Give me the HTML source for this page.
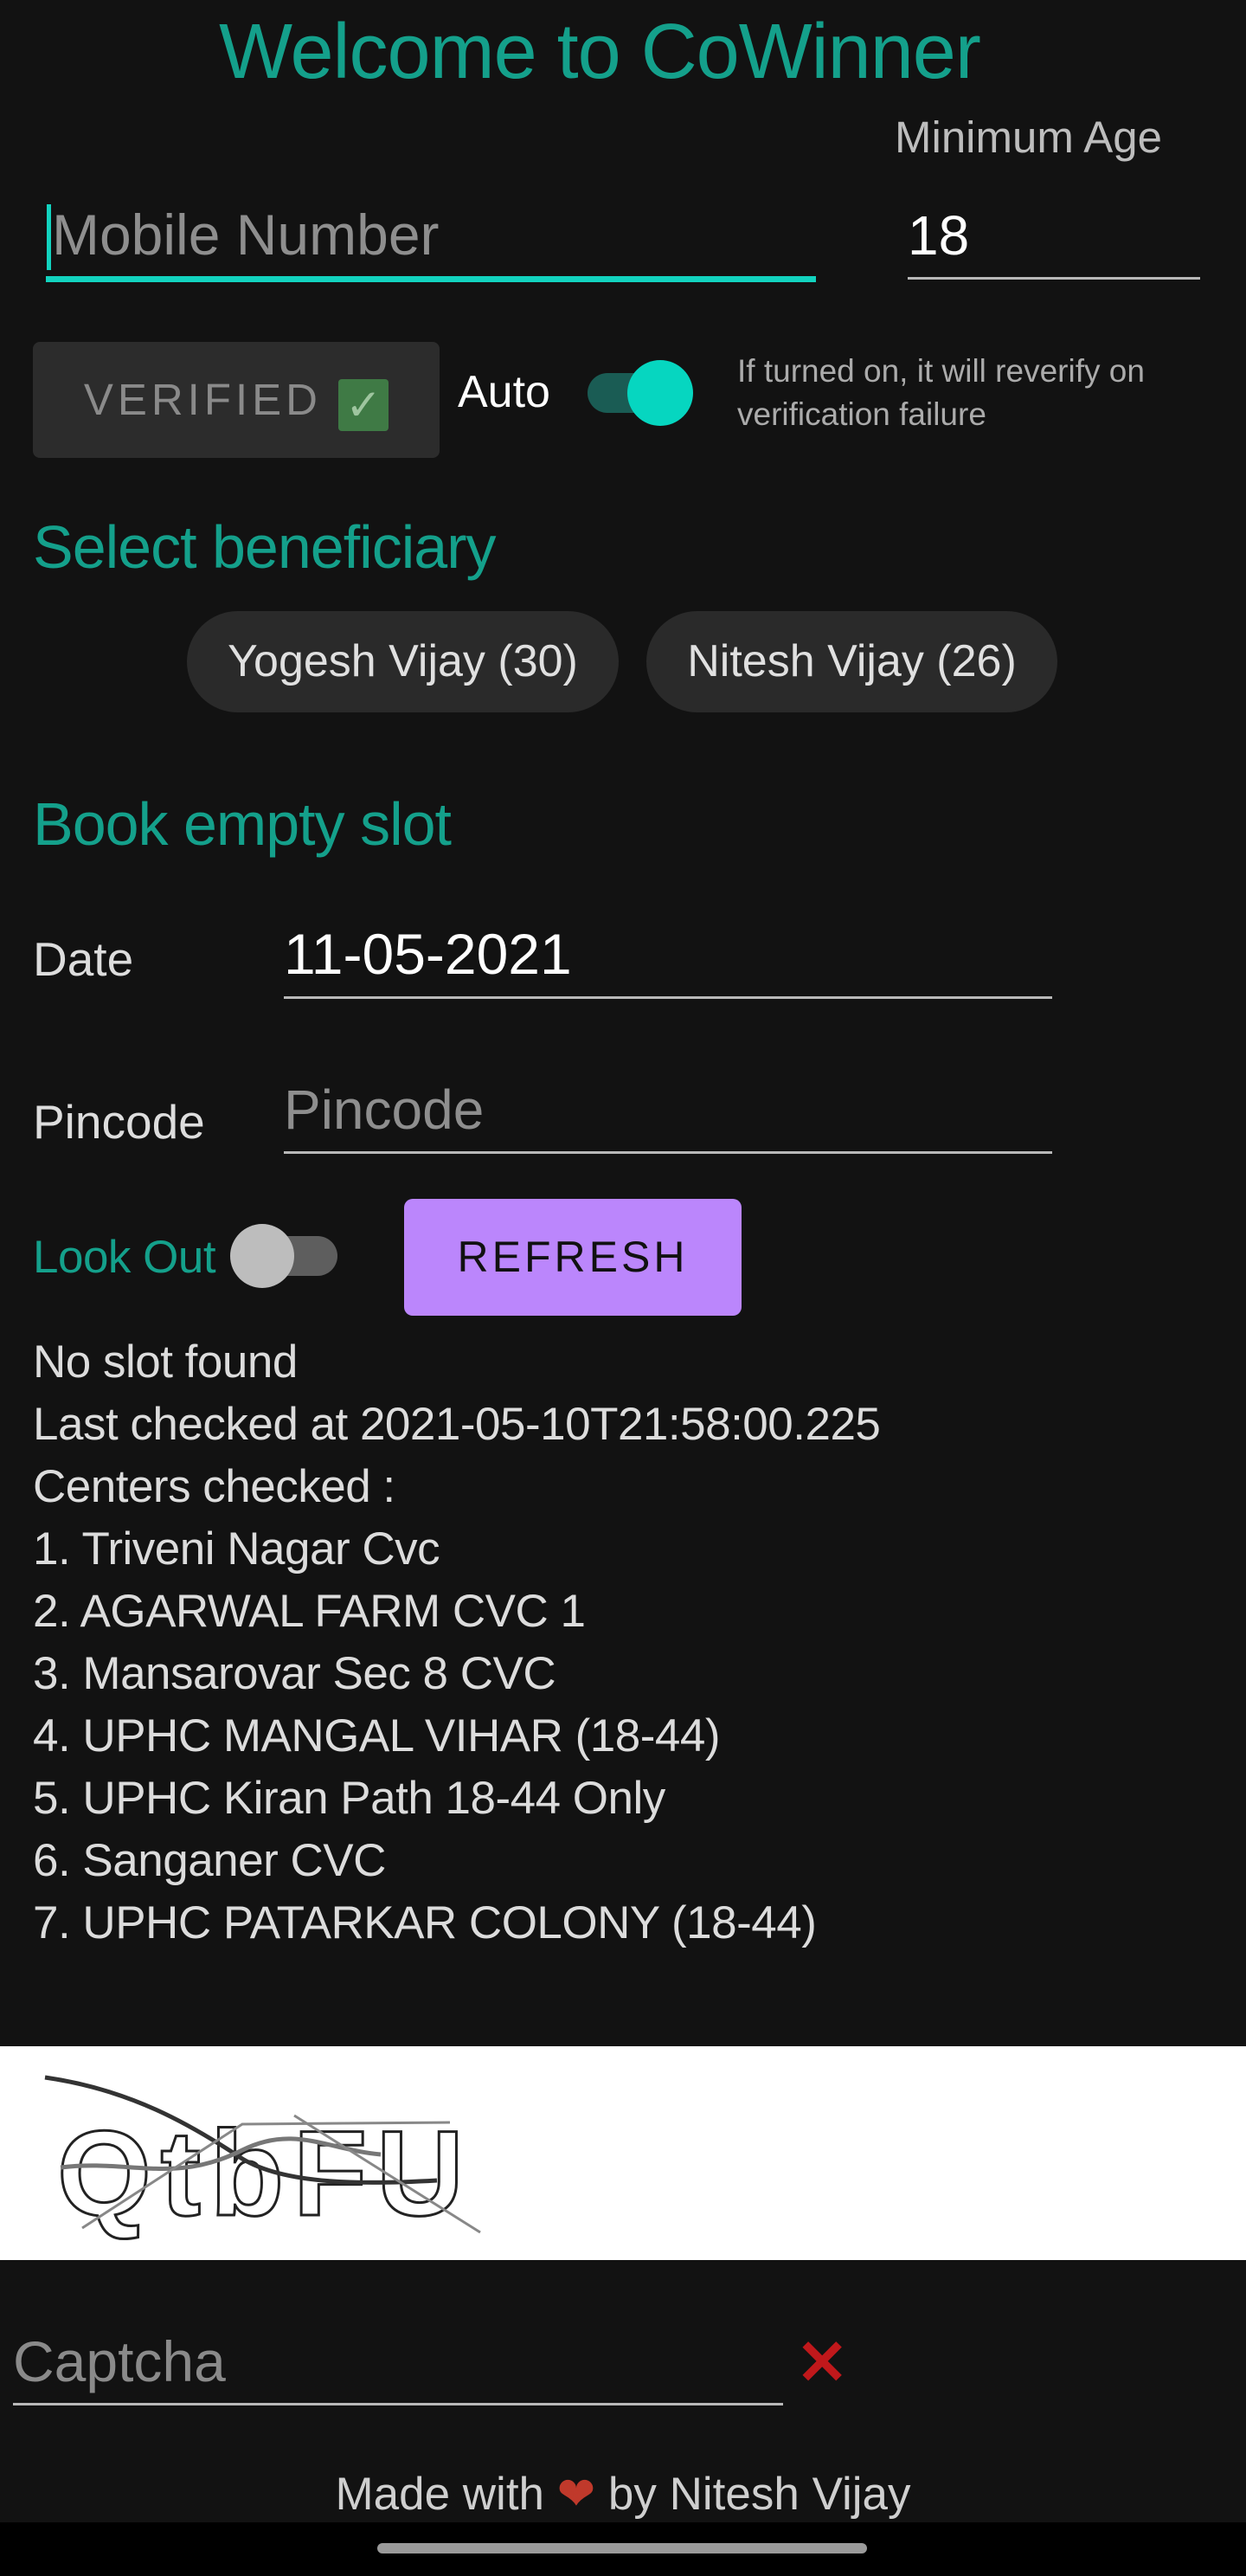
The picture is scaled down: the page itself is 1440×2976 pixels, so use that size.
<!DOCTYPE html>
<html><head><meta charset="utf-8"><style>
*{margin:0;padding:0;box-sizing:border-box}
body{width:1440px;height:2976px;background:#121212;position:relative;overflow:hidden;font-family:"Liberation Sans",sans-serif}
.a{position:absolute;white-space:nowrap}
.t{color:#14a08b}
.ul{position:absolute}
</style></head><body>
<div class="a t" style="left:0;width:1386px;text-align:center;top:8px;font-size:90px;line-height:104px;letter-spacing:-1px">Welcome to CoWinner</div>
<div class="a" style="left:1034px;top:130px;font-size:51px;line-height:58px;color:#bdbdbd">Minimum Age</div>
<div class="a" style="left:54px;top:236px;width:5px;height:76px;background:#12d3bf"></div>
<div class="a" style="left:60px;top:235px;font-size:66px;line-height:72px;color:#8e8e8e">Mobile Number</div>
<div class="ul" style="left:53px;top:319px;width:890px;height:7px;background:#12d3bf"></div>
<div class="a" style="left:1049px;top:236px;font-size:64px;line-height:72px;color:#fff">18</div>
<div class="ul" style="left:1049px;top:320px;width:338px;height:3px;background:#b8b8b8"></div>

<div class="a" style="left:38px;top:395px;width:470px;height:134px;background:#2c2c2c;border-radius:8px;color:#8a8a8a;font-size:51px;line-height:134px;text-align:center;letter-spacing:5px">VERIFIED <span style="display:inline-block;width:58px;height:60px;background:#3f7a45;border-radius:4px;color:#9ec59f;font-size:50px;line-height:60px;letter-spacing:0;vertical-align:-6px">✓</span></div>
<div class="a" style="left:529px;top:423px;font-size:52px;line-height:60px;color:#fff">Auto</div>
<div class="a" style="left:679px;top:431px;width:110px;height:46px;background:#1a5c54;border-radius:23px"></div>
<div class="a" style="left:725px;top:416px;width:76px;height:76px;background:#06d6c0;border-radius:50%"></div>
<div class="a" style="left:852px;top:404px;font-size:37px;line-height:50px;color:#ababab">If turned on, it will reverify on<br>verification failure</div>

<div class="a t" style="left:38px;top:594px;font-size:70px;line-height:76px;letter-spacing:-1px">Select beneficiary</div>
<div class="a" style="left:216px;top:706px;width:499px;height:117px;background:#2a2a2a;border-radius:59px;color:#e0e0e0;font-size:52px;line-height:117px;text-align:center">Yogesh Vijay (30)</div>
<div class="a" style="left:747px;top:706px;width:475px;height:117px;background:#2a2a2a;border-radius:59px;color:#e0e0e0;font-size:52px;line-height:117px;text-align:center">Nitesh Vijay (26)</div>

<div class="a t" style="left:38px;top:914px;font-size:70px;line-height:76px;letter-spacing:-1px">Book empty slot</div>
<div class="a" style="left:38px;top:1078px;font-size:55px;line-height:60px;color:#ddd">Date</div>
<div class="a" style="left:328px;top:1066px;font-size:66px;line-height:72px;color:#fff">11-05-2021</div>
<div class="ul" style="left:328px;top:1151px;width:888px;height:3px;background:#b8b8b8"></div>
<div class="a" style="left:38px;top:1266px;font-size:55px;line-height:60px;color:#ddd">Pincode</div>
<div class="a" style="left:328px;top:1246px;font-size:64px;line-height:72px;color:#8e8e8e">Pincode</div>
<div class="ul" style="left:328px;top:1330px;width:888px;height:3px;background:#b8b8b8"></div>

<div class="a t" style="left:38px;top:1423px;font-size:53px;line-height:60px;letter-spacing:-0.5px">Look Out</div>
<div class="a" style="left:284px;top:1428px;width:106px;height:46px;background:#5e5e5e;border-radius:23px"></div>
<div class="a" style="left:266px;top:1414px;width:74px;height:74px;background:#bdbdbd;border-radius:50%"></div>
<div class="a" style="left:467px;top:1385px;width:390px;height:135px;background:#bb86fc;border-radius:10px;color:#111;font-size:50px;line-height:135px;text-align:center;letter-spacing:4px">REFRESH</div>

<div class="a" style="left:38px;top:1538px;font-size:53px;line-height:72px;color:#dcdcdc;letter-spacing:-0.5px">No slot found<br>Last checked at 2021-05-10T21:58:00.225<br>Centers checked :<br>1. Triveni Nagar Cvc<br>2. AGARWAL FARM CVC 1<br>3. Mansarovar Sec 8 CVC<br>4. UPHC MANGAL VIHAR (18-44)<br>5. UPHC Kiran Path 18-44 Only<br>6. Sanganer CVC<br>7. UPHC PATARKAR COLONY (18-44)</div>

<div class="a" style="left:0;top:2364px;width:1440px;height:247px;background:#fff">
<svg width="600" height="247" viewBox="0 0 600 247">
<text x="66" y="195" font-family="Liberation Sans" font-size="140" font-weight="bold" fill="#fff" stroke="#222" stroke-width="3" textLength="470" lengthAdjust="spacing" transform="scale(1,1)">QtbFU</text>
<path d="M52 36 C150 50 220 90 280 130 C330 160 420 160 505 155" stroke="#333" stroke-width="5" fill="none"/>
<path d="M70 140 C150 130 200 160 280 120 C340 90 380 120 440 125" stroke="#777" stroke-width="5" fill="none"/>
<path d="M95 210 L280 90 L520 88" stroke="#888" stroke-width="3" fill="none"/>
<path d="M340 80 L555 215" stroke="#888" stroke-width="3" fill="none"/>
</svg></div>

<div class="a" style="left:15px;top:2692px;font-size:66px;line-height:72px;color:#8a8a8a">Captcha</div>
<div class="ul" style="left:15px;top:2776px;width:890px;height:3px;background:#b8b8b8"></div>
<div class="a" style="left:920px;top:2692px;font-size:72px;line-height:76px;color:#c0181b;font-weight:bold">✕</div>

<div class="a" style="left:0;width:1440px;text-align:center;top:2852px;font-size:53px;line-height:60px;color:#cfcfcf">Made with <span style="color:#c0392b">❤</span> by Nitesh Vijay</div>
<div class="a" style="left:0;top:2914px;width:1440px;height:62px;background:#000"></div>
<div class="a" style="left:436px;top:2938px;width:566px;height:12px;background:#9a9a9a;border-radius:6px"></div>
</body></html>
